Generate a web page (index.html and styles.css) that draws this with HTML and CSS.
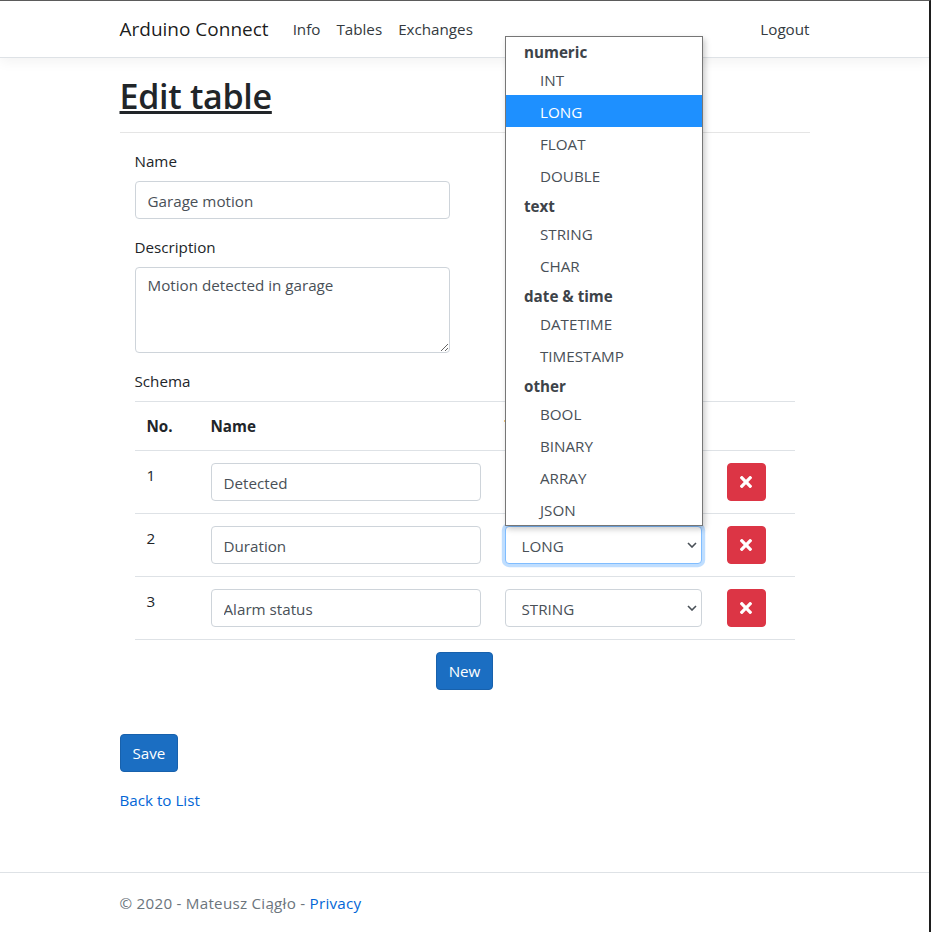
FILE: index.html
```html
<!DOCTYPE html>
<html lang="en">
<head>
<meta charset="utf-8">
<title>Edit table - Arduino Connect</title>
<link rel="stylesheet" href="styles.css">
</head>
<body>
<div class="window">
  <header class="navbar">
    <div class="container nav-inner">
      <a class="brand" href="#">Arduino Connect</a>
      <ul class="nav-links">
        <li><a href="#">Info</a></li>
        <li><a href="#">Tables</a></li>
        <li><a href="#">Exchanges</a></li>
      </ul>
      <ul class="nav-links nav-right">
        <li><a class="logout" href="#">Logout</a></li>
      </ul>
    </div>
  </header>

  <main class="container main">
    <h1 class="title">Edit table</h1>
    <hr class="rule">
    <form class="edit-form">
      <div class="fields">
        <div class="half">
          <div class="form-group">
            <label>Name</label>
            <input class="form-control" type="text" value="Garage motion">
          </div>
          <div class="form-group">
            <label>Description</label>
            <textarea class="form-control" rows="3">Motion detected in garage</textarea>
          </div>
        </div>
        <div class="schema">
          <label>Schema</label>
          <table class="schema-table">
            <colgroup>
              <col class="c-no"><col class="c-name"><col class="c-type"><col class="c-act">
            </colgroup>
            <thead>
              <tr><th>No.</th><th>Name</th><th>Type</th><th></th></tr>
            </thead>
            <tbody>
              <tr>
                <td>1</td>
                <td><input class="form-control" type="text" value="Detected"></td>
                <td>
                  <div class="select-wrap">
                    <select class="form-control select"><option>BOOL</option></select>
                    <svg class="chev" width="10" height="6" viewBox="0 0 10 6"><path d="M1 1l4 4 4-4" fill="none" stroke="#495057" stroke-width="1.6"/></svg>
                  </div>
                </td>
                <td><button type="button" class="btn btn-danger"><svg width="12" height="12" viewBox="0 80 352 352"><path fill="#fff" d="M242.72 256l100.07-100.07c12.28-12.28 12.28-32.19 0-44.48l-22.24-22.24c-12.28-12.28-32.19-12.28-44.48 0L176 189.28 75.93 89.21c-12.28-12.28-32.19-12.28-44.48 0L9.21 111.45c-12.28 12.28-12.28 32.19 0 44.48L109.28 256 9.21 356.07c-12.28 12.28-12.28 32.19 0 44.48l22.24 22.24c12.28 12.28 32.2 12.28 44.48 0L176 322.72l100.07 100.07c12.28 12.28 32.2 12.28 44.48 0l22.24-22.24c12.28-12.28 12.28-32.19 0-44.48L242.72 256z"/></svg></button></td>
              </tr>
              <tr>
                <td>2</td>
                <td><input class="form-control" type="text" value="Duration"></td>
                <td>
                  <div class="select-wrap">
                    <select class="form-control select focused"><option>LONG</option></select>
                    <svg class="chev" width="10" height="6" viewBox="0 0 10 6"><path d="M1 1l4 4 4-4" fill="none" stroke="#495057" stroke-width="1.6"/></svg>
                  </div>
                </td>
                <td><button type="button" class="btn btn-danger"><svg width="12" height="12" viewBox="0 80 352 352"><path fill="#fff" d="M242.72 256l100.07-100.07c12.28-12.28 12.28-32.19 0-44.48l-22.24-22.24c-12.28-12.28-32.19-12.28-44.48 0L176 189.28 75.93 89.21c-12.28-12.28-32.19-12.28-44.48 0L9.21 111.45c-12.28 12.28-12.28 32.19 0 44.48L109.28 256 9.21 356.07c-12.28 12.28-12.28 32.19 0 44.48l22.24 22.24c12.28 12.28 32.2 12.28 44.48 0L176 322.72l100.07 100.07c12.28 12.28 32.2 12.28 44.48 0l22.24-22.24c12.28-12.28 12.28-32.19 0-44.48L242.72 256z"/></svg></button></td>
              </tr>
              <tr>
                <td>3</td>
                <td><input class="form-control" type="text" value="Alarm status"></td>
                <td>
                  <div class="select-wrap">
                    <select class="form-control select"><option>STRING</option></select>
                    <svg class="chev" width="10" height="6" viewBox="0 0 10 6"><path d="M1 1l4 4 4-4" fill="none" stroke="#495057" stroke-width="1.6"/></svg>
                  </div>
                </td>
                <td><button type="button" class="btn btn-danger"><svg width="12" height="12" viewBox="0 80 352 352"><path fill="#fff" d="M242.72 256l100.07-100.07c12.28-12.28 12.28-32.19 0-44.48l-22.24-22.24c-12.28-12.28-32.19-12.28-44.48 0L176 189.28 75.93 89.21c-12.28-12.28-32.19-12.28-44.48 0L9.21 111.45c-12.28 12.28-12.28 32.19 0 44.48L109.28 256 9.21 356.07c-12.28 12.28-12.28 32.19 0 44.48l22.24 22.24c12.28 12.28 32.2 12.28 44.48 0L176 322.72l100.07 100.07c12.28 12.28 32.2 12.28 44.48 0l22.24-22.24c12.28-12.28 12.28-32.19 0-44.48L242.72 256z"/></svg></button></td>
              </tr>
            </tbody>
          </table>
          <div class="new-row"><button type="button" class="btn btn-primary">New</button></div>
        </div>
      </div>
      <div class="save-group">
        <button type="button" class="btn btn-primary">Save</button>
      </div>
    </form>
    <div><a class="link" href="#">Back to List</a></div>
  </main>

  <footer class="footer">
    <div class="container">© 2020 - Mateusz Ciągło - <a class="link" href="#">Privacy</a></div>
  </footer>

  <div class="popup">
    <div class="grp">numeric</div>
    <div class="opt">INT</div>
    <div class="opt sel">LONG</div>
    <div class="opt">FLOAT</div>
    <div class="opt">DOUBLE</div>
    <div class="grp">text</div>
    <div class="opt">STRING</div>
    <div class="opt">CHAR</div>
    <div class="grp">date &amp; time</div>
    <div class="opt">DATETIME</div>
    <div class="opt">TIMESTAMP</div>
    <div class="grp">other</div>
    <div class="opt">BOOL</div>
    <div class="opt">BINARY</div>
    <div class="opt">ARRAY</div>
    <div class="opt">JSON</div>
  </div>
</div>
</body>
</html>
```

FILE: styles.css
```css
* { box-sizing: border-box; }
html, body { margin: 0; padding: 0; }
body {
  font-family: "Open Sans", "Noto Sans", sans-serif;
  font-size: 15.2px;
  line-height: 24px;
  color: #212529;
  background: #fff;
}
.window {
  position: relative;
  width: 931px;
  min-height: 933px;
  border-top: 1px solid #5b5b5b;
  border-right: 2px solid #1e1e1e;
  display: flex;
  flex-direction: column;
  overflow: hidden;
}
.container { width: 720px; padding: 0 15px; margin: 0 auto; }

/* navbar */
.navbar {
  padding: 8px 0;
  border-bottom: 1px solid #dee2e6;
  box-shadow: 0 4px 12px rgba(0,0,0,.05);
  background: #fff;
}
.nav-inner { display: flex; align-items: center; }
.brand {
  font-size: 19px;
  line-height: 30px;
  padding: 5px 0;
  margin-right: 16px;
  color: rgba(0,0,0,.9);
  text-decoration: none;
}
.nav-links { list-style: none; margin: 0; padding: 0; display: flex; }
.nav-links a { display: block; padding: 8px; color: #343a40; text-decoration: none; }
.nav-right { margin-left: auto; }
.nav-links a.logout { padding-right: 0; }

/* main */
.main { flex: 1; margin-top: 16px; padding-bottom: 16px; }
.title {
  margin: 0;
  font-size: 34px;
  line-height: 44px;
  padding-bottom: 4px;
  font-weight: 600;
  letter-spacing: -0.3px;
  text-decoration: underline;
  text-decoration-thickness: 3px;
  text-underline-offset: 2px;
}
.rule { margin: 10px 0 16px; border: 0; border-top: 1px solid rgba(0,0,0,.1); }
.fields { padding: 0 15px; }
.half { width: 315px; }
.form-group { margin-bottom: 16px; }
label { display: inline-block; margin-bottom: 8px; }
.form-control {
  display: block;
  width: 100%;
  height: 38px;
  padding: 7px 12px 5px;
  font-family: inherit;
  font-size: 15.2px;
  line-height: 24px;
  color: #495057;
  background: #fff;
  border: 1px solid #ced4da;
  border-radius: 4px;
  margin: 0;
}
textarea.form-control { height: 86px; padding-top: 5px; resize: vertical; }

/* table */
.schema-table { width: 100%; border-collapse: collapse; table-layout: fixed; }
.c-no { width: 64px; }
.c-name { width: 294px; }
.c-type { width: 222px; }
.c-act { width: 80px; }
.schema-table th, .schema-table td {
  padding: 12px;
  text-align: left;
  vertical-align: top;
  border-top: 1px solid #dee2e6;
}
.schema-table th { font-weight: 700; vertical-align: bottom; }
.schema-table tbody tr:last-child td { border-bottom: 1px solid #dee2e6; }
.select-wrap { position: relative; width: 197px; }
.select {
  appearance: none;
  -webkit-appearance: none;
  padding-left: 16px;
}
.select.focused {
  border-color: #80bdff;
  box-shadow: 0 0 0 3.2px rgba(0,123,255,.25);
  outline: 0;
}
.chev { position: absolute; right: 5px; top: 16px; pointer-events: none; }

/* buttons */
.btn {
  display: inline-flex;
  align-items: center;
  justify-content: center;
  font-family: inherit;
  font-size: 15.2px;
  line-height: 24px;
  font-weight: 400;
  padding: 6px 12px;
  border: 1px solid transparent;
  border-radius: 4px;
  cursor: pointer;
  height: 38px;
}
.btn-primary { color: #fff; background: #1b6ec2; border-color: #1861ac; }
.btn-danger { background: #dc3545; border-color: #dc3545; width: 39px; padding: 0; }
.new-row { margin-top: 12px; text-align: center; }
.save-group { margin-top: 44px; margin-bottom: 16px; }
.link { color: #0366d6; text-decoration: none; }

/* footer */
.footer {
  border-top: 1px solid #dee2e6;
  line-height: 60px;
  white-space: nowrap;
  color: #6c757d;
  letter-spacing: 0.25px;
}

/* native select popup */
.popup {
  position: absolute;
  left: 505px;
  top: 35px;
  width: 198px;
  background: #fff;
  border: 1px solid #767676;
  box-shadow: 2px 3px 6px rgba(0,0,0,.22);
  color: #495057;
}
.grp { height: 26px; line-height: 30px; padding-left: 18px; font-weight: 700; color: #3d4349; }
.opt { height: 32px; line-height: 34px; padding-left: 34px; }
.opt.sel { background: #1e90ff; color: #fff; }
```
